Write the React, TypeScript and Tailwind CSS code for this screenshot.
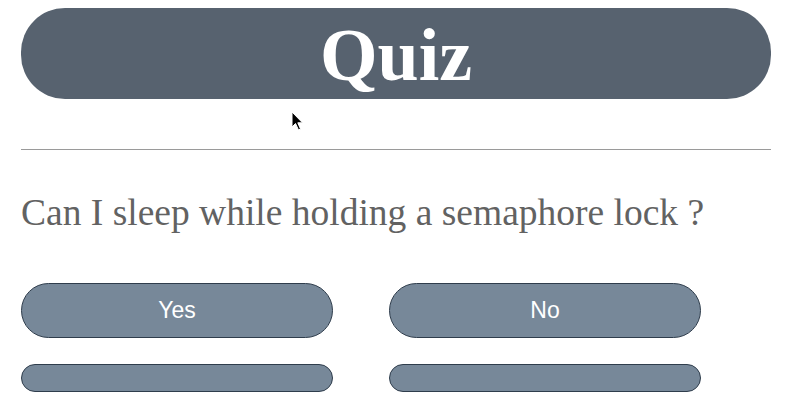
import React from "react";

export default function App() {
  return (
    <div className="relative w-[786px] h-[418px] bg-white overflow-hidden">
      <div className="pl-[21px] pt-[8px] w-[771px]">
        <div className="h-[91px] w-[750px] rounded-[44px] bg-[#57626f] flex items-center justify-center">
          <h1
            className="text-[74px] font-bold leading-none text-white pt-[2px]"
            style={{ fontFamily: '"Liberation Serif", "Times New Roman", serif' }}
          >
            Quiz
          </h1>
        </div>
        <div className="mt-[50px] h-[1px] w-[750px] bg-[#9a9a9a]" />
        <p
          className="mt-[41px] text-[37.5px] leading-[44px] text-[#626262]"
          style={{ fontFamily: '"Liberation Serif", "Times New Roman", serif' }}
        >
          Can I sleep while holding a semaphore lock ?
        </p>
        <div
          className="mt-[48px] grid grid-cols-[312px_312px] gap-x-[56px] gap-y-[26px]"
          style={{ fontFamily: '"Liberation Sans", Arial, sans-serif' }}
        >
          <button className="h-[55px] rounded-full bg-[#778899] border border-[#2f3d4c] text-white text-[23px]">
            Yes
          </button>
          <button className="h-[55px] rounded-full bg-[#778899] border border-[#2f3d4c] text-white text-[23px]">
            No
          </button>
          <button className="h-[28px] rounded-full bg-[#778899] border border-[#2f3d4c]" />
          <button className="h-[28px] rounded-full bg-[#778899] border border-[#2f3d4c]" />
        </div>
      </div>
      <svg
        className="absolute left-[291px] top-[111px]"
        width="14"
        height="21"
        viewBox="0 0 14 21"
      >
        <path d="M1 1 L1 16 L4.5 12.5 L7.5 19 L9.5 18 L6.8 11.8 L11.5 11.8 Z" fill="#000" stroke="#fff" strokeWidth="1" />
      </svg>
    </div>
  );
}
